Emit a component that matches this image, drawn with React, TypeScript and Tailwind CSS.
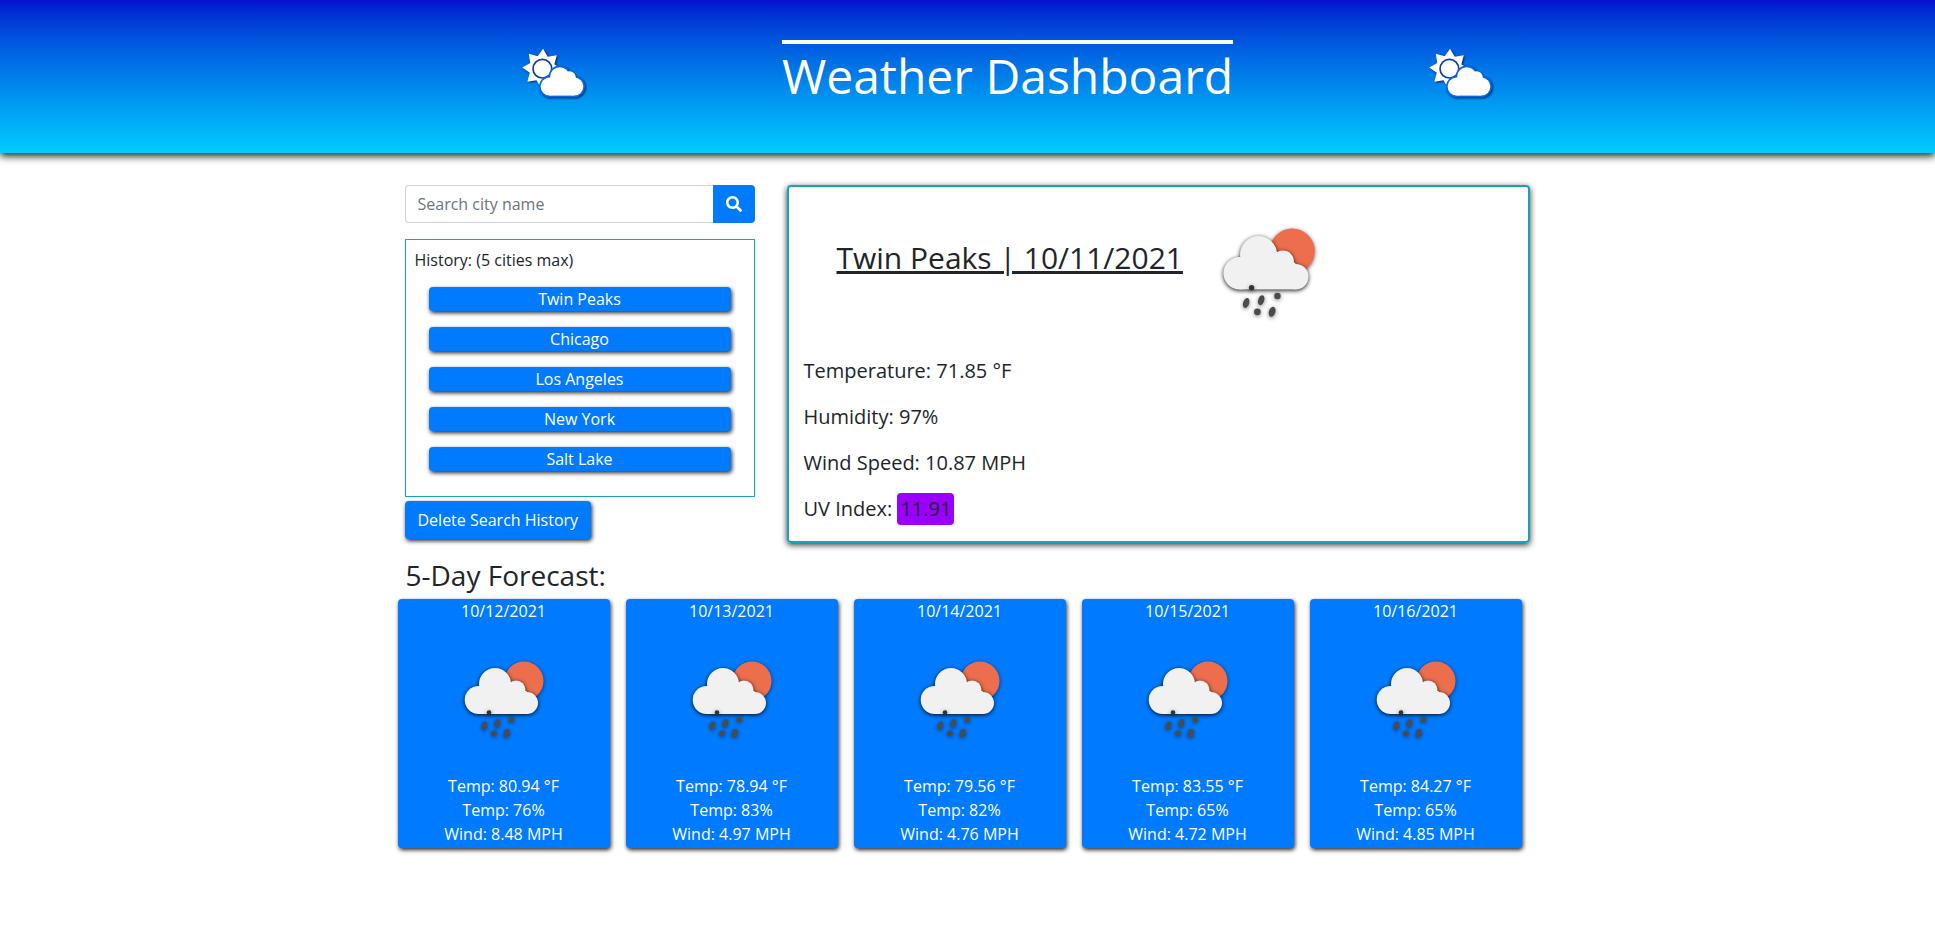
import { FaSearch } from "react-icons/fa";

const history = ["Twin Peaks", "Chicago", "Los Angeles", "New York", "Salt Lake"];

const forecast = [
  { date: "10/12/2021", temp: "80.94", hum: "76", wind: "8.48" },
  { date: "10/13/2021", temp: "78.94", hum: "83", wind: "4.97" },
  { date: "10/14/2021", temp: "79.56", hum: "82", wind: "4.76" },
  { date: "10/15/2021", temp: "83.55", hum: "65", wind: "4.72" },
  { date: "10/16/2021", temp: "84.27", hum: "65", wind: "4.85" },
];

const starPoints = Array.from({ length: 16 }, (_, i) => {
  const r = i % 2 === 0 ? 20.5 : 13.5;
  const a = (i * Math.PI) / 8 - Math.PI / 2 + 0.05;
  return `${(31.7 + r * Math.cos(a)).toFixed(1)},${(38.3 + r * Math.sin(a)).toFixed(1)}`;
}).join(" ");

function HeaderIcon() {
  return (
    <svg viewBox="8 14 72 62" className="w-[70px] h-[60px] drop-shadow-[1px_1px_1px_rgba(0,0,40,0.7)]">
      <polygon points={starPoints} fill="#fff" />
      <circle cx="32" cy="38.5" r="10.5" fill="#0b3f96" />
      <circle cx="32" cy="38.5" r="8.8" fill="#fff" />
      <g fill="#0a66e4" stroke="#0a66e4" strokeWidth="3.4">
        <circle cx="39.5" cy="57" r="9.3" />
        <circle cx="50" cy="47" r="10" />
        <circle cx="65" cy="57" r="9.3" />
        <rect x="39.5" y="50" width="25" height="16.3" />
      </g>
      <g fill="#fff">
        <circle cx="39.5" cy="57" r="9.3" />
        <circle cx="50" cy="47" r="10" />
        <circle cx="60" cy="47.5" r="6.5" />
        <circle cx="65" cy="57" r="9.3" />
        <rect x="39.5" y="50" width="25" height="16.3" />
      </g>
    </svg>
  );
}

function RainIcon({ className }: { className: string }) {
  return (
    <svg viewBox="0 0 100 100" className={className}>
      <g className="drop-shadow-[0_1px_2px_rgba(0,0,0,0.6)]">
        <circle cx="70" cy="32" r="19.5" fill="#ec6e4c" />
      </g>
      <g fill="#f1f1f1" className="drop-shadow-[0_1px_2px_rgba(0,0,0,0.9)]">
        <circle cx="24.7" cy="51" r="14" />
        <circle cx="41" cy="35" r="16" />
        <circle cx="62" cy="41" r="9.5" />
        <circle cx="73" cy="54" r="11" />
        <rect x="24.7" y="42" width="48" height="23" />
      </g>
      <g fill="#4b4b4b" className="drop-shadow-[0_1px_2px_rgba(0,0,0,0.5)]">
        <circle cx="35" cy="63.5" r="2.3" fill="#333" />
        <ellipse cx="30.3" cy="76.7" rx="2.6" ry="4.4" transform="rotate(18 30.3 76.7)" />
        <ellipse cx="43.3" cy="74.3" rx="2.6" ry="4.4" transform="rotate(18 43.3 74.3)" />
        <circle cx="57.3" cy="70.7" r="2.8" />
        <circle cx="40" cy="84.3" r="2.9" />
        <ellipse cx="52.7" cy="84.3" rx="2.8" ry="4.4" transform="rotate(18 52.7 84.3)" />
      </g>
    </svg>
  );
}

export default function App() {
  return (
    <div className="min-h-[937px] bg-white text-[#212529] font-['Open_Sans',sans-serif]">
      {/* Header */}
      <header className="h-[153px] bg-gradient-to-b from-[#0a0ccf] to-[#00ccff] shadow-[0_3px_8px_rgba(0,0,0,0.9)] flex justify-center items-start gap-[193px] pl-[78px]">
        <div className="mt-[45px] ml-[2px]">
          <HeaderIcon />
        </div>
        <h1 className="mt-10 border-t-4 border-white text-white text-[48px] leading-[64px] font-normal whitespace-nowrap">
          Weather Dashboard
        </h1>
        <div className="mt-[45px]">
          <HeaderIcon />
        </div>
      </header>

      <main className="w-[1140px] mx-auto pt-8">
        <div className="flex items-start ml-[7px] gap-8">
          {/* Search and history */}
          <section className="w-[350px]">
            <div className="flex h-[38px]">
              <input
                placeholder="Search city name"
                className="w-[308px] h-full border border-[#ced4da] border-r-0 rounded-l px-3 text-base bg-white placeholder:text-[#6c757d] outline-none"
              />
              <button className="w-[42px] h-full bg-[#007bff] rounded-r text-white flex items-center justify-center text-base">
                <FaSearch />
              </button>
            </div>
            <div className="mt-4 h-[258px] border border-[#17a2b8] pt-[9px] px-[9px]">
              <p className="text-base leading-[22px]">History: (5 cities max)</p>
              <div className="mt-4 mx-[14px] flex flex-col gap-4">
                {history.map((city) => (
                  <button
                    key={city}
                    className="h-6 rounded bg-[#007bff] text-white text-base leading-6 shadow-[1px_2px_4px_rgba(0,0,0,0.85)]"
                  >
                    {city}
                  </button>
                ))}
              </div>
            </div>
            <button className="mt-1 h-[38px] px-[13px] rounded bg-[#007bff] text-white text-base shadow-[1px_2px_4px_rgba(0,0,0,0.85)] whitespace-nowrap">
              Delete Search History
            </button>
          </section>

          {/* Current weather */}
          <section className="w-[743px] h-[358px] border-2 border-[#17a2b8] rounded shadow-[0_2px_6px_rgba(0,0,0,0.8)] px-[15px]">
            <div className="flex items-start h-[160px]">
              <h2 className="ml-[33px] mt-[53px] text-[30px] leading-9 underline whitespace-pre">Twin Peaks | 10/11/2021</h2>
              <RainIcon className="w-[116px] h-[116px] ml-[28px] mt-[27px]" />
            </div>
            <div className="text-[20px] leading-[28px] flex flex-col gap-[18px] mt-[10px]">
              <p>Temperature: 71.85 °F</p>
              <p>Humidity: 97%</p>
              <p>Wind Speed: 10.87 MPH</p>
              <p className="-mt-[2px]">
                UV Index: <span className="inline-block h-8 leading-8 px-[3px] rounded bg-[#9900ff]">11.91</span>
              </p>
            </div>
          </section>
        </div>

        {/* Forecast */}
        <h3 className="ml-2 mt-[15px] text-[28px] leading-[34px] font-normal">5-Day Forecast:</h3>
        <div className="flex gap-4 mt-[7px]">
          {forecast.map((day) => (
            <article
              key={day.date}
              className="w-[212px] h-[249px] rounded bg-[#007bff] text-white text-base leading-6 text-center shadow-[1px_2px_4px_rgba(0,0,0,0.85)] flex flex-col items-center"
            >
              <p>{day.date}</p>
              <RainIcon className="w-[100px] h-[100px] mt-[26px] mb-[25px]" />
              <p>Temp: {day.temp} °F</p>
              <p>Temp: {day.hum}%</p>
              <p>Wind: {day.wind} MPH</p>
            </article>
          ))}
        </div>
      </main>
    </div>
  );
}
